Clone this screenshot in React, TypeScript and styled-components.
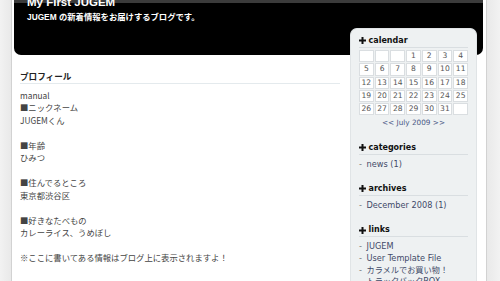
import React from "react";
import styled, { createGlobalStyle } from "styled-components";

const Global = createGlobalStyle`
  html, body { margin: 0; padding: 0; }
  body {
    background: linear-gradient(to right, #f2f2f2 0, #e9e9e9 11px, #e9e9e9 487px, #f2f2f2 500px);
    height: 281px;
    overflow: hidden;
  }
`;

const Page = styled.div`
  margin-left: 11px;
  width: 474px;
  min-height: 281px;
  background: #fff;
  border-left: 1px solid #d2d2d2;
  border-right: 1px solid #d2d2d2;
`;

const Header = styled.header`
  margin: 0 3px 0 2px;
  height: 55px;
  box-sizing: border-box;
  padding: 0 13px;
  background: linear-gradient(#3b3b3b 0, #3b3b3b 3px, #000 3px);
  border-radius: 0 0 7px 7px;
  color: #fff;
  overflow: hidden;
`;

const Title = styled.h1`
  margin: -4px 0 0;
  font: bold 11.5px/12px "Liberation Sans", Arial, sans-serif;
`;

const Tagline = styled.p`
  margin: 3px 0 0;
  font: bold 8.33px/12px "Liberation Sans", "Noto Sans CJK JP", sans-serif;
`;

const Columns = styled.div`
  display: flex;
  align-items: flex-start;
  margin-top: -27px;
`;

const Main = styled.main`
  width: 338px;
  box-sizing: border-box;
  padding: 41.5px 10px 0 8px;
  font-family: "Noto Sans CJK JP", sans-serif;
  color: #444;
`;

const EntryTitle = styled.h2`
  margin: 0;
  font-size: 8.6px;
  line-height: 12px;
  font-weight: bold;
  color: #222;
  border-bottom: 1px solid #e4eaed;
  padding-bottom: 1px;
`;

const EntryBody = styled.div`
  margin-top: 5px;
  font-size: 8.33px;
  line-height: 12.5px;
`;

const Line = styled.div`
  height: 12.5px;
  white-space: nowrap;
`;

const Sidebar = styled.aside`
  position: relative;
  width: 127px;
  box-sizing: border-box;
  min-height: 262px;
  padding: 5.5px 8px 0;
  background: #eef1f2;
  border: 1px solid #e0e4e6;
  border-bottom: none;
  border-radius: 7px 7px 0 0;
  font-family: "DejaVu Sans", "Noto Sans CJK JP", sans-serif;
`;

const Section = styled.section`
  margin-bottom: 12.6px;
`;

const SectionTitle = styled.h3`
  margin: 0;
  display: flex;
  align-items: center;
  gap: 2.5px;
  font-size: 8px;
  line-height: 12px;
  font-weight: bold;
  color: #111;
  border-bottom: 1px solid #d9dee1;
`;

const Calendar = styled.div`
  margin-top: 2.5px;
  display: grid;
  grid-template-columns: repeat(7, 1fr);
  grid-auto-rows: 12.3px;
  gap: 1px;
`;

const Day = styled.div`
  box-sizing: border-box;
  background: #fff;
  border: 1px solid #dadee1;
  font-size: 7.6px;
  line-height: 10.3px;
  text-align: center;
  color: #555;
`;

const CalNav = styled.div`
  margin-top: 1.5px;
  text-align: center;
  font-size: 7.3px;
  line-height: 12px;
  color: #4b5a86;
`;

const List = styled.ul`
  list-style: none;
  margin: 4px 0 0;
  padding: 0;
`;

const Item = styled.li`
  font-size: 8.2px;
  line-height: 11.7px;
  color: #3f4a68;
  white-space: nowrap;
`;

const Dash = styled.span`
  color: #777;
  margin-right: 4.5px;
`;

const Plus = () => (
  <svg width="7" height="7" viewBox="0 0 7 7" aria-hidden>
    <path d="M2.5 0h2v2.5H7v2H4.5V7h-2V4.5H0v-2h2.5z" fill="#111" />
  </svg>
);

const days: (number | null)[] = [
  null, null, null,
  ...Array.from({ length: 31 }, (_, i) => i + 1),
  null,
];

const profile = [
  "manual",
  "■ニックネーム",
  "JUGEMくん",
  "",
  "■年齢",
  "ひみつ",
  "",
  "■住んでるところ",
  "東京都渋谷区",
  "",
  "■好きなたべもの",
  "カレーライス、うめぼし",
  "",
  "※ここに書いてある情報はブログ上に表示されますよ！",
];

export default function App() {
  return (
    <>
      <Global />
      <Page>
        <Header>
          <Title>My First JUGEM</Title>
          <Tagline>JUGEM の新着情報をお届けするブログです。</Tagline>
        </Header>
        <Columns>
          <Main>
            <EntryTitle>プロフィール</EntryTitle>
            <EntryBody>
              {profile.map((t, i) => (
                <Line key={i}>{t}</Line>
              ))}
            </EntryBody>
          </Main>
          <Sidebar>
            <Section>
              <SectionTitle>
                <Plus />calendar
              </SectionTitle>
              <Calendar>
                {days.map((d, i) => (
                  <Day key={i}>{d ?? ""}</Day>
                ))}
              </Calendar>
              <CalNav>&lt;&lt; July 2009 &gt;&gt;</CalNav>
            </Section>
            <Section>
              <SectionTitle>
                <Plus />categories
              </SectionTitle>
              <List>
                <Item><Dash>-</Dash>news (1)</Item>
              </List>
            </Section>
            <Section>
              <SectionTitle>
                <Plus />archives
              </SectionTitle>
              <List>
                <Item><Dash>-</Dash>December 2008 (1)</Item>
              </List>
            </Section>
            <Section>
              <SectionTitle>
                <Plus />links
              </SectionTitle>
              <List>
                <Item><Dash>-</Dash>JUGEM</Item>
                <Item><Dash>-</Dash>User Template File</Item>
                <Item><Dash>-</Dash>カラメルでお買い物！</Item>
                <Item><Dash>-</Dash>トラックバックBOX</Item>
              </List>
            </Section>
          </Sidebar>
        </Columns>
      </Page>
    </>
  );
}
